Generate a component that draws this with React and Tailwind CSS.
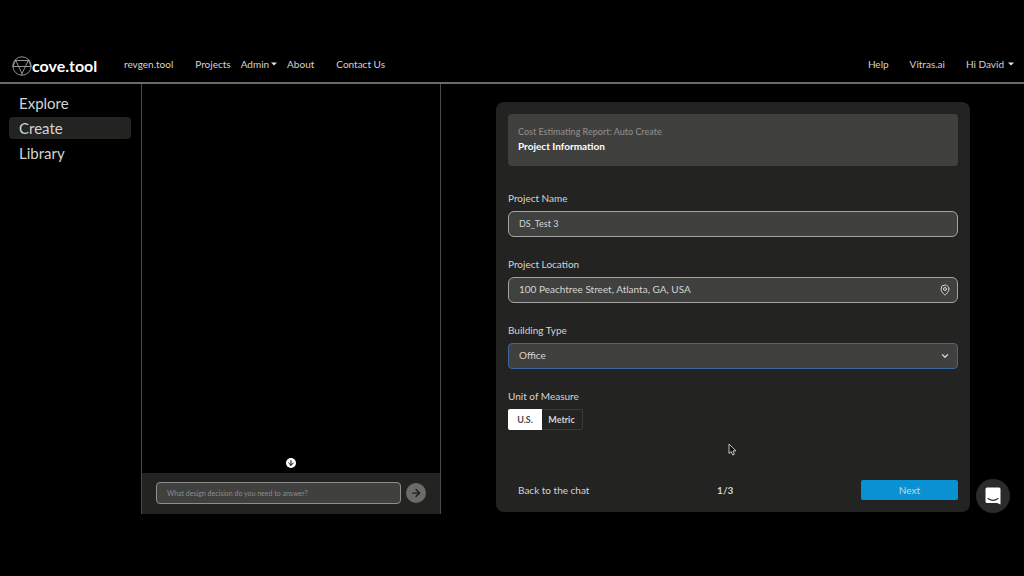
import React, { useState } from 'react';
import { ArrowDown, ArrowRight, ChevronDown, MapPin } from 'lucide-react';

const leftLinks = [
  { label: 'revgen.tool', className: 'mr-[22px]' },
  { label: 'Projects', className: 'mr-2.5' },
  { label: 'Admin', caret: true, className: 'mr-2.5' },
  { label: 'About', className: 'mr-[22px]' },
  { label: 'Contact Us', className: '' },
];

const sideLinks = ['Explore', 'Create', 'Library'];

function Caret() {
  return (
    <svg viewBox="0 0 6 4" className="w-1.5 h-1" fill="#e5e5e5">
      <path d="M0 0.4h6L3 3.6z" />
    </svg>
  );
}

function Logo() {
  return (
    <a href="#home" className="flex items-center w-28 pt-1 text-white">
      <svg viewBox="0 0 20 20" className="w-5 h-5 shrink-0" fill="none" stroke="#a3a3a3" strokeWidth="0.9">
        <circle cx="10" cy="10" r="9.2" />
        <path d="M2.500 4.500h15M3.500 4L10 17.500 16.500 4M1 10.500h5.500M13.500 10.500H19M6.500 10.500h7M10 17.500v2M1 10.500L3.500 4.500M19 10.500L16.500 4.500" />
      </svg>
      <span className="text-base leading-5 font-bold">cove.tool</span>
    </a>
  );
}

function Header() {
  return (
    <header className="flex items-center justify-between h-9 pb-0.5 pl-3 pr-2.5 border-b-2 border-[#6b6b6b] text-[10px] text-[#d4d4d4]">
      <div className="flex items-center">
        <Logo />
        <nav className="flex items-center">
          {leftLinks.map((link) => (
            <a key={link.label} href="#nav" className={`flex items-center gap-0.5 ${link.className}`}>
              {link.label}
              {link.caret && <Caret />}
            </a>
          ))}
        </nav>
      </div>
      <nav className="flex items-center gap-[21px]">
        <a href="#help">Help</a>
        <a href="#vitras">Vitras.ai</a>
        <button type="button" className="flex items-center gap-1">
          Hi David
          <Caret />
        </button>
      </nav>
    </header>
  );
}

function Sidebar() {
  return (
    <aside className="w-[141px] shrink-0 pt-2 pl-[9px] pr-2.5">
      <nav className="flex flex-col gap-[3px]">
        {sideLinks.map((name) => (
          <a
            key={name}
            href={`#${name.toLowerCase()}`}
            className={`h-[22px] rounded px-2.5 text-[15px] leading-[22px] text-[#d4d4d4] ${name === 'Create' ? 'bg-[#232322]' : ''}`}
          >
            {name}
          </a>
        ))}
      </nav>
    </aside>
  );
}

function ChatPanel() {
  return (
    <section className="flex flex-col w-[300px] shrink-0 border-x border-[#4a4a4a]">
      <div className="flex-1 flex items-end justify-center pb-[5px]">
        <button
          type="button"
          aria-label="Scroll to latest"
          className="flex items-center justify-center w-2.5 h-2.5 rounded-full bg-white text-black"
        >
          <ArrowDown size={8} strokeWidth={3} />
        </button>
      </div>
      <form className="flex items-center gap-[5px] bg-[#232322] px-3.5 pt-[9px] pb-2.5" onSubmit={(e) => e.preventDefault()}>
        <input
          type="text"
          aria-label="Ask a question"
          placeholder="What design decision do you need to answer?"
          className="flex-1 min-w-0 h-[22px] rounded border border-[#8e8e8e] bg-[#40403f] px-2.5 text-[7px] text-white placeholder:text-[#8e8e8e] outline-none"
        />
        <button
          type="submit"
          aria-label="Send"
          className="flex items-center justify-center w-5 h-5 rounded-full bg-[#6b6b6a] text-[#1c1c1c]"
        >
          <ArrowRight size={12} strokeWidth={2.5} />
        </button>
      </form>
    </section>
  );
}

function ProjectForm() {
  const [unit, setUnit] = useState('U.S.');

  return (
    <form
      className="flex-1 rounded-lg bg-[#232322] p-3 text-[10px] text-[#d4d4d4]"
      onSubmit={(e) => e.preventDefault()}
    >
      <div className="rounded bg-[#40403f] px-2.5 pt-2.5 pb-3 leading-[15px]">
        <p className="text-[9px] font-medium text-[#8c8c8b]">Cost Estimating Report: Auto Create</p>
        <h1 className="font-bold text-white">Project Information</h1>
      </div>

      <div className="flex flex-col gap-5 mt-[25px]">
        <div className="flex flex-col gap-1.5">
          <label htmlFor="name" className="leading-[14px]">Project Name</label>
          <input
            id="name"
            defaultValue="DS_Test 3"
            className="h-[26px] w-full rounded-md border border-[#a3a3a3] bg-[#40403f] px-2.5 pb-0.5 text-[9px] outline-none"
          />
        </div>

        <div className="flex flex-col gap-1.5">
          <label htmlFor="location" className="leading-[14px]">Project Location</label>
          <div className="flex items-center h-[26px] rounded-md border border-[#a3a3a3] bg-[#40403f] pl-2.5 pr-1.5">
            <input
              id="location"
              defaultValue="100 Peachtree Street, Atlanta, GA, USA"
              className="flex-1 min-w-0 pb-0.5 bg-transparent outline-none"
            />
            <MapPin size={12} strokeWidth={2} />
          </div>
        </div>

        <div className="flex flex-col gap-1.5">
          <label htmlFor="type" className="leading-[14px]">Building Type</label>
          <div className="flex items-center h-[26px] rounded-sm border border-[#3b66a5] bg-[#40403f] pr-[7px]">
            <select id="type" className="flex-1 h-full appearance-none bg-transparent pl-2.5 pb-0.5 outline-none">
              <option>Office</option>
              <option>Residential</option>
            </select>
            <ChevronDown size={10} strokeWidth={3} className="pointer-events-none" />
          </div>
        </div>

        <div className="flex flex-col gap-1.5">
          <span id="unit" className="leading-[14px]">Unit of Measure</span>
          <div role="group" aria-labelledby="unit" className="flex h-[21px] w-[75px] rounded-xs border border-[#3a3a39] text-[9px] font-bold">
            {['U.S.', 'Metric'].map((name) => (
              <button
                key={name}
                type="button"
                aria-pressed={unit === name}
                onClick={() => setUnit(name)}
                className={unit === name ? '-m-px w-[34px] rounded-l-xs bg-white text-[#4a4a4a]' : 'flex-1'}
              >
                {name}
              </button>
            ))}
          </div>
        </div>
      </div>

      <div className="flex items-center justify-between mt-[50px] pl-2.5">
        <button type="button">Back to the chat</button>
        <span className="font-bold">1/3</span>
        <button type="submit" className="w-[97px] h-5 rounded-xs bg-[#0a91d3]">Next</button>
      </div>
    </form>
  );
}

export default function App() {
  return (
    <div className="min-h-screen bg-black pt-12 font-['Lato',sans-serif]">
      <Header />
      <main className="flex">
        <Sidebar />
        <ChatPanel />
        <div className="flex-1 flex items-start pl-[55px] pr-[54px] pt-[18px] pb-0.5">
          <ProjectForm />
        </div>
      </main>

      {/* Chat launcher */}
      <button
        type="button"
        aria-label="Open messenger"
        className="fixed right-3.5 bottom-[63px] flex items-center justify-center w-[34px] h-[34px] rounded-full bg-[#2b2b2a]"
      >
        <svg viewBox="0 0 16 18" className="w-4 h-[18px]" fill="none">
          <path d="M2 0.500h12a1.500 1.500 0 0 1 1.500 1.500v15.500l-3.500-1.500H2A1.500 1.500 0 0 1 0.500 14.500V2A1.500 1.500 0 0 1 2 0.500z" fill="white" />
          <path d="M3 11.500c3 2.300 7 2.300 10 0" stroke="#2b2b2a" strokeWidth="1.100" strokeLinecap="round" />
        </svg>
      </button>

      {/* Pointer */}
      <svg viewBox="0 0 9 13" className="absolute left-[728px] top-[443px] w-[9px] h-[13px] pointer-events-none">
        <path
          d="M1 1v9.500l2.200-2 1.500 3.500 1.700-0.700L5 7.900h3z"
          fill="#111"
          stroke="#d4d4d4"
          strokeWidth="0.900"
          strokeLinejoin="round"
        />
      </svg>
    </div>
  );
}
